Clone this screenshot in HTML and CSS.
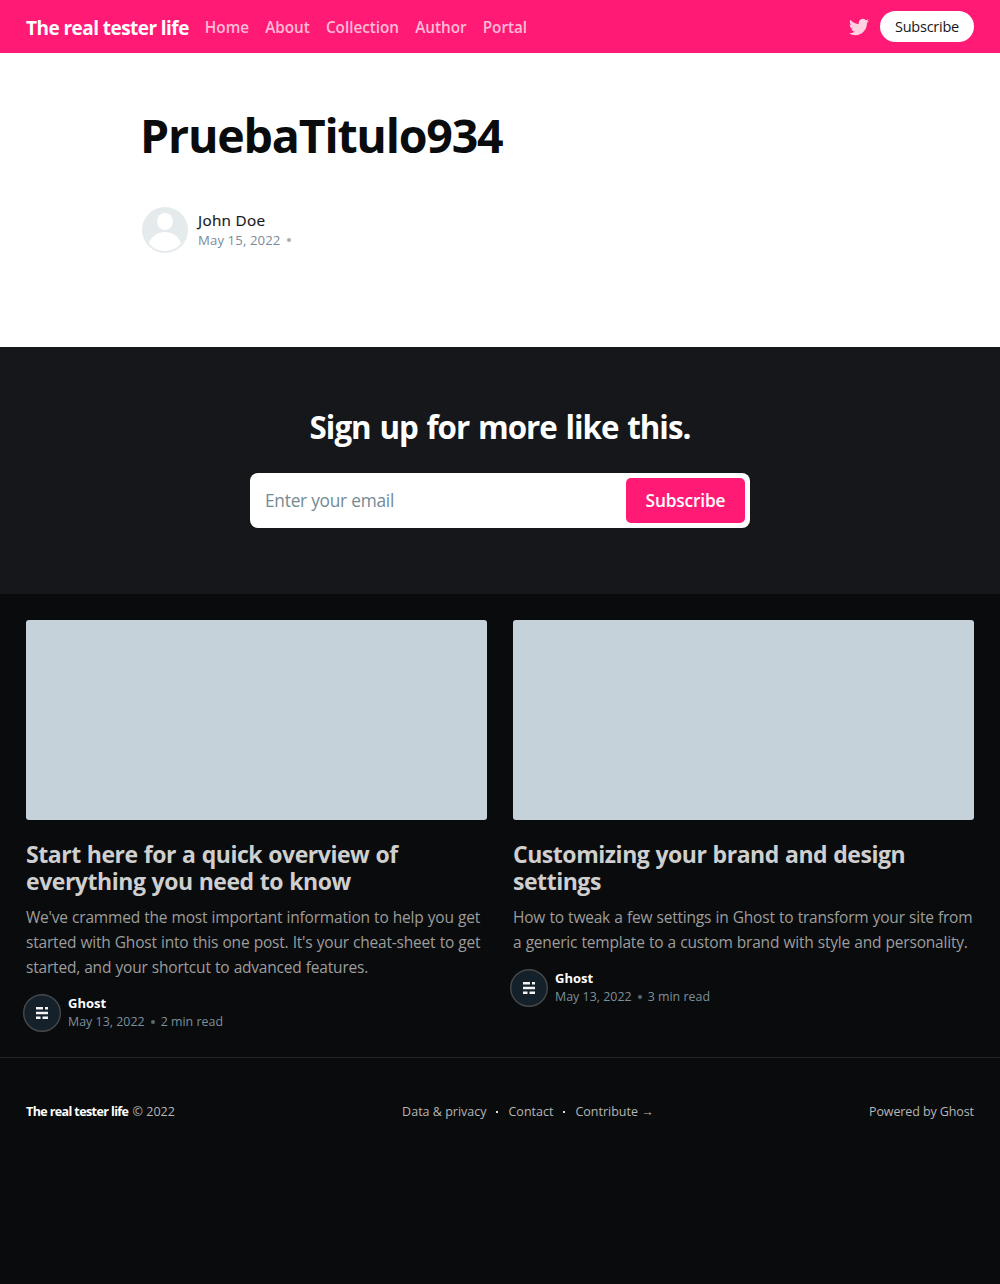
FILE: index.html
```html
<!DOCTYPE html>
<html lang="en">
<head>
<meta charset="utf-8">
<title>PruebaTitulo934</title>
<link rel="stylesheet" href="styles.css">
</head>
<body>
<header class="head">
  <a class="logo">The real tester life</a>
  <nav class="nav"><a>Home</a><a>About</a><a>Collection</a><a>Author</a><a>Portal</a></nav>
  <div class="actions">
    <svg class="twitter" viewBox="0 0 24 24"><path d="M23.954 4.569a10 10 0 0 1-2.825.775 4.958 4.958 0 0 0 2.163-2.723c-.951.555-2.005.959-3.127 1.184a4.92 4.92 0 0 0-8.384 4.482C7.691 8.094 4.066 6.13 1.64 3.161a4.822 4.822 0 0 0-.666 2.475c0 1.71.87 3.213 2.188 4.096a4.904 4.904 0 0 1-2.228-.616v.061a4.923 4.923 0 0 0 3.946 4.827 4.996 4.996 0 0 1-2.212.085 4.937 4.937 0 0 0 4.604 3.417 9.868 9.868 0 0 1-6.102 2.105c-.39 0-.779-.023-1.17-.067a13.995 13.995 0 0 0 7.557 2.209c9.054 0 13.999-7.496 13.999-13.986 0-.209 0-.42-.015-.63a9.936 9.936 0 0 0 2.46-2.548z"/></svg>
    <a class="pill">Subscribe</a>
  </div>
</header>
<main class="article">
  <h1 class="title">PruebaTitulo934</h1>
  <div class="byline">
    <svg class="avatar" viewBox="0 0 24 24"><path fill="#e5eaed" d="M12 0a12 12 0 1 0 0 24 12 12 0 0 0 0-24z"/><ellipse fill="#fff" cx="12" cy="7.5" rx="4.1" ry="4.5"/><path fill="#fff" d="M3.600 19C5 15 8.200 13 12 13s7 2 8.400 6a10.900 10.900 0 0 1-16.800 0z"/></svg>
    <div class="meta"><span class="name">John Doe</span><span class="date"><span>May 15, 2022</span><i class="dot"></i></span></div>
  </div>
</main>
<section class="signup">
  <h2 class="signup-title">Sign up for more like this.</h2>
  <div class="form"><span class="placeholder">Enter your email</span><a class="button">Subscribe</a></div>
</section>
<section class="cards">
  <article class="card">
    <div class="image"></div>
    <h2 class="card-title">Start here for a quick overview of<br>everything you need to know</h2>
    <p class="excerpt">We've crammed the most important information to help you get<br>started with Ghost into this one post. It's your cheat-sheet to get<br>started, and your shortcut to advanced features.</p>
    <div class="author">
      <svg class="ghost" viewBox="0 0 38 38"><circle cx="19" cy="19" r="18.300" fill="#15212a" stroke="#46494c" stroke-width="1.400"/><path fill="#f2f4f5" d="M13 13h7v2.500h-7zM22 13h3v2.500h-3zM13 17.800h12v2.500h-12zM13 22.500h4.500v2.500h-4.500zM19.500 22.500h5.500v2.500h-5.500z"/></svg>
      <div class="author-text"><b class="author-name">Ghost</b><span class="author-date"><span>May 13, 2022</span><i class="dot"></i><span>2 min read</span></span></div>
    </div>
  </article>
  <article class="card">
    <div class="image"></div>
    <h2 class="card-title">Customizing your brand and design<br>settings</h2>
    <p class="excerpt">How to tweak a few settings in Ghost to transform your site from<br>a generic template to a custom brand with style and personality.</p>
    <div class="author">
      <svg class="ghost" viewBox="0 0 38 38"><circle cx="19" cy="19" r="18.300" fill="#15212a" stroke="#46494c" stroke-width="1.400"/><path fill="#f2f4f5" d="M13 13h7v2.500h-7zM22 13h3v2.500h-3zM13 17.800h12v2.500h-12zM13 22.500h4.500v2.500h-4.500zM19.500 22.500h5.500v2.500h-5.500z"/></svg>
      <div class="author-text"><b class="author-name">Ghost</b><span class="author-date"><span>May 13, 2022</span><i class="dot"></i><span>3 min read</span></span></div>
    </div>
  </article>
</section>
<footer class="foot">
  <div class="copyright"><b>The real tester life</b> © 2022</div>
  <nav class="foot-nav"><a>Data &amp; privacy</a><i class="sep"></i><a>Contact</a><i class="sep"></i><a>Contribute →</a></nav>
  <div class="powered">Powered by Ghost</div>
</footer>
</body>
</html>
```
FILE: styles.css
```css
* { box-sizing: border-box; }
body { margin: 0; background: #0a0b0c; font-family: "Open Sans", "Noto Sans", sans-serif; color: #15171a; }
h1, h2, p { margin: 0; }
.head { height: 53px; padding: 0 26px; display: flex; align-items: center; background: #ff1a75; color: #fff; }
.logo { font-size: 19px; line-height: 26px; font-weight: 700; letter-spacing: -0.55px; margin: 2px 16px 0 0; white-space: nowrap; }
.nav { display: flex; gap: 16.2px; font-size: 15.3px; font-weight: 600; letter-spacing: -.03px; color: #ffbad6; }
.actions { margin-left: auto; display: flex; align-items: center; gap: 11px; }
.twitter { width: 20px; height: 20px; fill: #ffd1e3; }
.pill { width: 94px; height: 31px; border-radius: 16px; background: #fff; color: #15171a; font-size: 14.500px; letter-spacing: -.25px; display: flex; align-items: center; justify-content: center; }
.article { height: 294px; padding: 50px 140px 0; background: #fff; }
.title { font-size: 46.5px; line-height: 64px; font-weight: 700; letter-spacing: -1.2px; color: #0a0b0c; }
.byline { margin: 40px 0 0 2px; display: flex; align-items: center; gap: 10px; }
.avatar { width: 46px; height: 46px; }
.meta { display: flex; flex-direction: column; }
.name { font-size: 15.3px; line-height: 20px; font-weight: 500; letter-spacing: .3px; -webkit-text-stroke: .2px currentColor; }
.date { font-size: 13.2px; line-height: 20px; letter-spacing: .1px; color: #7c8b9a; display: flex; align-items: center; }
.dot { width: 4px; height: 4px; border-radius: 50%; background: currentColor; margin: 0 6px; opacity: .7; }
.signup { height: 247px; padding-top: 57px; background: #15171a; }
.signup-title { text-align: center; color: #fff; font-size: 31.3px; line-height: 46px; font-weight: 700; letter-spacing: -1px; word-spacing: 1.6px; }
.form { width: 500px; height: 55px; margin: 23px auto 0; padding: 5px 5px 5px 15px; background: #fff; border-radius: 8px; display: flex; align-items: center; justify-content: space-between; }
.placeholder { font-size: 17.3px; letter-spacing: -.24px; color: #738a94; }
.button { width: 119px; height: 45px; border-radius: 5px; background: #ff1a75; color: #fff; font-size: 17.3px; font-weight: 600; letter-spacing: -.15px; display: flex; align-items: center; justify-content: center; }
.cards { height: 463px; padding: 26px 26px 0; display: grid; grid-template-columns: 461px 461px; gap: 26px; }
.image { height: 200px; border-radius: 3px; background: #c5d2d9; }
.card-title { margin-top: 21px; font-size: 23px; line-height: 27px; font-weight: 700; letter-spacing: -.46px; word-spacing: .6px; color: #cfcfcf; white-space: nowrap; }
.excerpt { margin-top: 10px; font-size: 15.5px; line-height: 25px; letter-spacing: -.2px; word-spacing: .4px; color: #9d9d9d; white-space: nowrap; }
.author { margin: 14px 0 0 -3px; display: flex; align-items: center; gap: 7px; }
.ghost { width: 38px; height: 38px; }
.author-text { display: flex; flex-direction: column; }
.author-name { font-size: 13px; line-height: 18px; margin: -1px 0 1px; color: #fff; align-self: flex-start; }
.author-date { font-size: 12.400px; line-height: 18px; letter-spacing: .02px; color: #7c909c; display: flex; align-items: center; }
.foot { border-top: 1px solid #242628; height: 108px; padding: 0 26px; display: flex; justify-content: space-between; align-items: center; font-size: 12.500px; color: #b5b6b6; white-space: nowrap; }
.copyright b { color: #fff; letter-spacing: -.6px; margin-right: 1px; }
.foot-nav { display: flex; align-items: center; padding-left: 12px; }
.sep { width: 2px; height: 2px; background: #ddd; margin: 0 10px; }
.powered { letter-spacing: -.1px; }
```
